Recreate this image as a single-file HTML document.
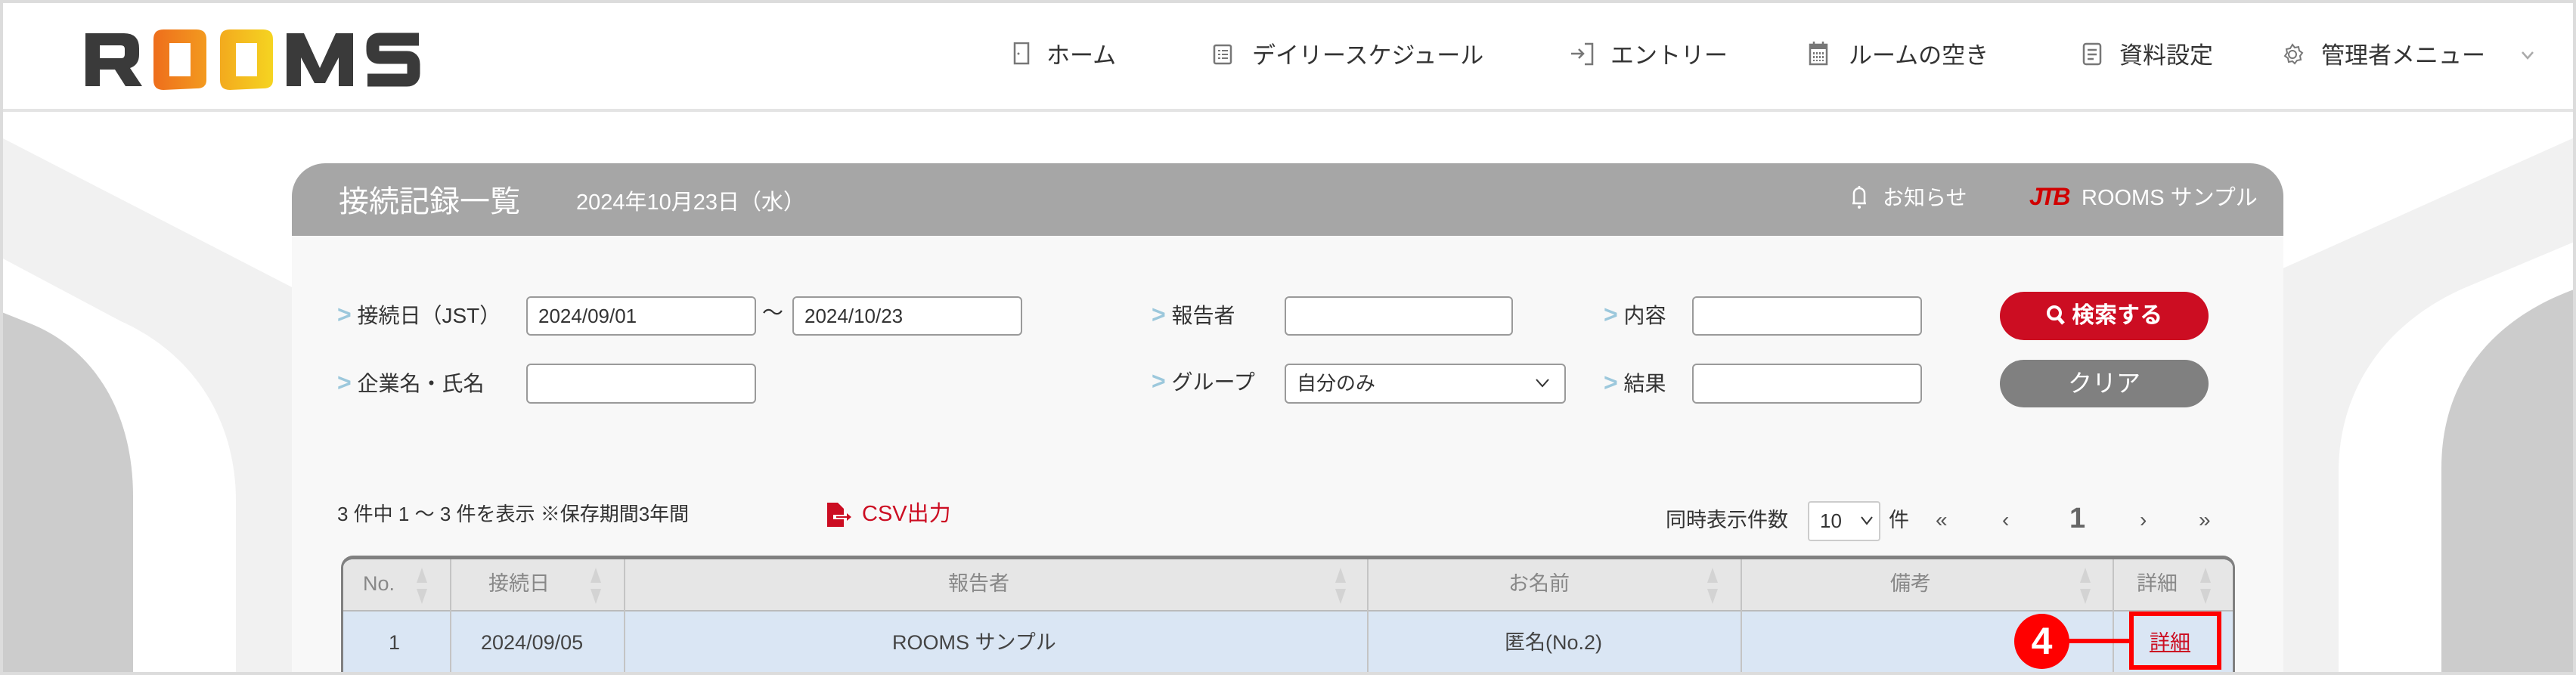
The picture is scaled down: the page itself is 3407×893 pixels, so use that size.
<!DOCTYPE html>
<html><head><meta charset="utf-8">
<style>
*{margin:0;padding:0;box-sizing:border-box}
html,body{width:3407px;height:893px;overflow:hidden}
body{background:#fff;font-family:"Liberation Sans","Noto Sans CJK JP",sans-serif;color:#333;position:relative}
.a{position:absolute;white-space:nowrap}
.nav{font-size:31px;color:#333;top:54px;line-height:40px}
.lbl{font-size:28px;color:#333;line-height:36px}
.chev{color:#9cc8dc;font-weight:bold;font-size:32px}
.inp{position:absolute;background:#fff;border:2px solid #9a9a9a;border-radius:6px;font-size:26px;padding-left:14px;line-height:48px;color:#333}
.th{font-size:27px;color:#888;line-height:40px}
.td{font-size:27px;color:#444;line-height:40px}
.sort{position:absolute;width:14px;height:48px}
.sort:before{content:"";position:absolute;left:0;top:0;border-left:7px solid transparent;border-right:7px solid transparent;border-bottom:20px solid #d3d3d3}
.sort:after{content:"";position:absolute;left:0;bottom:0;border-left:7px solid transparent;border-right:7px solid transparent;border-top:20px solid #d3d3d3}
.vl{position:absolute;width:2px;background:#c4c4c4}
</style></head><body>
<svg class="a" style="left:0;top:0" width="3407" height="893">
<path d="M0 181 L390 382 L390 893 L0 893Z" fill="#f1f1f1"/>
<path d="M0 340 L160 425 C260 470 312 560 312 662 L312 893 L0 893Z" fill="#fff"/>
<path d="M0 412 L40 428 C120 460 176 540 176 657 L176 893 L0 893Z" fill="#ccc"/>
<path d="M3407 181 L3015 357 L3015 893 L3407 893Z" fill="#f1f1f1"/>
<path d="M3407 319 L3257 382 C3150 430 3093 520 3093 624 L3093 893 L3407 893Z" fill="#fff"/>
<path d="M3407 382 C3300 420 3229 500 3229 619 L3229 893 L3407 893Z" fill="#ccc"/>
</svg>
<div class="a" style="left:0;top:0;width:3407px;height:148px;background:#fff;border-bottom:4px solid #e4e4e4"></div>
<div class="a" style="left:386px;top:216px;width:2634px;height:677px;background:#f8f8f8;border-radius:44px 44px 0 0;overflow:hidden">
<div style="height:96px;background:#a6a6a6"></div></div>
<svg class="a" style="left:110px;top:38px" width="450" height="84" viewBox="0 0 450 84">
<defs><linearGradient id="g1" x1="0" x2="1"><stop offset="0" stop-color="#ee6e1c"/><stop offset="1" stop-color="#f39a1f"/></linearGradient>
<linearGradient id="g2" x1="0" x2="1"><stop offset="0" stop-color="#f3aa1e"/><stop offset="1" stop-color="#f5d421"/></linearGradient></defs>
<path d="M3 6 H54 Q74 6 74 26 V34 Q74 48 62 52 L78 76 H56 L42 54 H22 V76 H3Z M22 22 V39 H50 Q55 39 55 34 V27 Q55 22 50 22Z" fill="#3a3a3a"/>
<path d="M106 1 H150 Q163 1 163 14 V68 Q163 79 150 79 L106 81 Q93 81 93 68 V14 Q93 1 106 1Z M114 19 V63 H142 V19Z" fill="url(#g1)"/>
<path d="M194 1 H238 Q251 1 251 14 V68 Q251 79 238 79 L194 81 Q181 81 181 68 V14 Q181 1 194 1Z M202 19 V63 H230 V19Z" fill="url(#g2)"/>
<path d="M269 6 H292 L313 52 L334 6 H357 V76 H338 V38 L320 72 H306 L288 38 V76 H269Z" fill="#3a3a3a"/>
<path d="M444 14 H392 Q383 14 383 23 V29 Q383 38 392 38 H428 Q437 38 437 47 V59 Q437 68 428 68 H376" fill="none" stroke="#3a3a3a" stroke-width="17"/>
</svg>
<svg class="a" style="left:1340px;top:56px" width="24" height="30"><rect x="2" y="1" width="18" height="27" fill="none" stroke="#777" stroke-width="2.5"/><circle cx="7" cy="15" r="1.5" fill="#777"/></svg>
<div class="a nav" style="left:1384px">ホーム</div>
<svg class="a" style="left:1604px;top:58px" width="28" height="28"><rect x="2" y="2" width="22" height="24" rx="2" fill="none" stroke="#777" stroke-width="2.5"/><path d="M7 9h3M12 9h8M7 14h3M12 14h8M7 19h3M12 19h8" stroke="#777" stroke-width="2"/></svg>
<div class="a nav" style="left:1656px">デイリースケジュール</div>
<svg class="a" style="left:2076px;top:56px" width="34" height="32"><path d="M2 15h16M12 9l6 6-6 6" stroke="#777" stroke-width="2.5" fill="none"/><path d="M20 2h10v27H20" stroke="#777" stroke-width="2.5" fill="none"/></svg>
<div class="a nav" style="left:2130px">エントリー</div>
<svg class="a" style="left:2392px;top:54px" width="28" height="34"><rect x="2" y="5" width="22" height="26" fill="none" stroke="#777" stroke-width="2.5"/><rect x="2" y="5" width="22" height="6" fill="#777"/><path d="M7 1v6M19 1v6" stroke="#777" stroke-width="2.5"/><path d="M7 15v12M11 15v12M15 15v12M19 15v12" stroke="#777" stroke-width="2" stroke-dasharray="3 2"/></svg>
<div class="a nav" style="left:2445px">ルームの空き</div>
<svg class="a" style="left:2754px;top:56px" width="28" height="32"><rect x="2" y="2" width="22" height="27" rx="3" fill="none" stroke="#777" stroke-width="2.5"/><path d="M7 10h12M7 16h12M7 22h8" stroke="#777" stroke-width="2.5"/></svg>
<div class="a nav" style="left:2803px">資料設定</div>
<svg class="a" style="left:3016px;top:56px" width="32" height="32" viewBox="0 0 32 32"><path d="M16 3l3 4 5-1 1 5 4 3-3 4 1 5-5 1-3 4-3-3-5 1-1-5-4-3 3-4-1-5 5-1z" fill="none" stroke="#777" stroke-width="2"/><circle cx="16" cy="16" r="5" fill="none" stroke="#777" stroke-width="2"/></svg>
<div class="a nav" style="left:3070px">管理者メニュー</div>
<svg class="a" style="left:3334px;top:66px" width="18" height="14"><path d="M2 3l7 8 7-8" stroke="#aaa" stroke-width="2.5" fill="none"/></svg>
<div class="a" style="left:448px;top:242px;font-size:40px;color:#fff;line-height:50px">接続記録一覧</div>
<div class="a" style="left:762px;top:250px;font-size:29px;color:#fff;line-height:36px">2024年10月23日（水）</div>
<svg class="a" style="left:2448px;top:244px" width="22" height="34"><path d="M4 24V12a7 7 0 0 1 14 0v12M2 25h18M11 2v3" stroke="#fff" stroke-width="2.5" fill="none"/><circle cx="11" cy="30" r="2" fill="#fff"/></svg>
<div class="a" style="left:2490px;top:244px;font-size:28px;color:#fff;line-height:36px">お知らせ</div>
<div class="a" style="left:2684px;top:240px;font-size:32px;color:#d10000;font-weight:bold;font-style:italic;line-height:40px;letter-spacing:-3px">JTB</div>
<div class="a" style="left:2753px;top:243px;font-size:29px;color:#fff;line-height:38px">ROOMS サンプル</div>
<div class="a lbl" style="left:446px;top:398px"><span class="chev">&gt;</span> 接続日（JST）</div>
<div class="inp" style="left:696px;top:392px;width:304px;height:52px">2024/09/01</div>
<div class="a lbl" style="left:1008px;top:396px">〜</div>
<div class="inp" style="left:1048px;top:392px;width:304px;height:52px">2024/10/23</div>
<div class="a lbl" style="left:1523px;top:398px"><span class="chev">&gt;</span> 報告者</div>
<div class="inp" style="left:1699px;top:392px;width:302px;height:52px"></div>
<div class="a lbl" style="left:2121px;top:398px"><span class="chev">&gt;</span> 内容</div>
<div class="inp" style="left:2238px;top:392px;width:304px;height:52px"></div>
<div class="a" style="left:2645px;top:386px;width:276px;height:64px;border-radius:32px;background:#cc0d22;color:#fff;font-size:30px;line-height:64px;text-align:center;font-weight:bold"><svg width="26" height="28" style="vertical-align:-4px"><circle cx="11" cy="11" r="8" fill="none" stroke="#fff" stroke-width="4"/><path d="M16 17l7 8" stroke="#fff" stroke-width="5"/></svg> 検索する</div>
<div class="a lbl" style="left:446px;top:488px"><span class="chev">&gt;</span> 企業名・氏名</div>
<div class="inp" style="left:696px;top:481px;width:304px;height:53px"></div>
<div class="a lbl" style="left:1523px;top:486px"><span class="chev">&gt;</span> グループ</div>
<div class="inp" style="left:1699px;top:481px;width:372px;height:53px">自分のみ</div>
<svg class="a" style="left:2030px;top:500px" width="20" height="14"><path d="M2 2l8 9 8-9" stroke="#333" stroke-width="2" fill="none"/></svg>
<div class="a lbl" style="left:2121px;top:488px"><span class="chev">&gt;</span> 結果</div>
<div class="inp" style="left:2238px;top:481px;width:304px;height:53px"></div>
<div class="a" style="left:2645px;top:476px;width:276px;height:63px;border-radius:32px;background:#808080;color:#fff;font-size:32px;line-height:63px;text-align:center">クリア</div>
<div class="a" style="left:446px;top:662px;font-size:26px;line-height:36px;color:#333">3 件中 1 〜 3 件を表示 ※保存期間3年間</div>
<svg class="a" style="left:1094px;top:665px" width="38" height="32"><path d="M0 0h14l8 8v24H0z" fill="#cc0d22"/><path d="M8 16h14v-5l8 8-8 8v-5H8z" fill="#fff"/><path d="M12 18h14v-4l6 5-6 5v-4H12z" fill="#cc0d22"/></svg>
<div class="a" style="left:1140px;top:662px;font-size:29px;line-height:36px;color:#cc0d22">CSV出力</div>
<div class="a" style="left:2203px;top:670px;font-size:27px;line-height:36px">同時表示件数</div>
<div class="a" style="left:2391px;top:663px;width:96px;height:53px;border:2px solid #ccc;border-radius:4px;background:#fff;font-size:26px;line-height:49px;padding-left:14px">10</div>
<svg class="a" style="left:2460px;top:682px" width="18" height="14"><path d="M2 2l7 9 7-9" stroke="#333" stroke-width="2" fill="none"/></svg>
<div class="a" style="left:2498px;top:670px;font-size:27px;line-height:36px">件</div>
<div class="a" style="left:2560px;top:670px;font-size:28px;line-height:36px;color:#555">«</div>
<div class="a" style="left:2648px;top:670px;font-size:28px;line-height:36px;color:#555">‹</div>
<div class="a" style="left:2737px;top:664px;font-size:38px;line-height:44px;color:#666;font-weight:bold">1</div>
<div class="a" style="left:2830px;top:670px;font-size:28px;line-height:36px;color:#555">›</div>
<div class="a" style="left:2908px;top:670px;font-size:28px;line-height:36px;color:#555">»</div>
<div class="a" style="left:451px;top:735px;width:2505px;height:158px;border:3px solid #808080;border-top-width:5px;border-bottom:0;border-radius:16px 16px 0 0;overflow:hidden;background:#dae6f4">
<div style="height:69px;background:#e6e6e6;border-bottom:2px solid #bbb"></div></div>
<div class="vl" style="left:595px;top:740px;height:153px"></div>
<div class="vl" style="left:825px;top:740px;height:153px"></div>
<div class="vl" style="left:1808px;top:740px;height:153px"></div>
<div class="vl" style="left:2302px;top:740px;height:153px"></div>
<div class="vl" style="left:2794px;top:740px;height:153px"></div>
<div class="a th" style="left:480px;top:752px">No.</div><div class="sort" style="left:551px;top:751px"></div>
<div class="a th" style="left:646px;top:752px">接続日</div><div class="sort" style="left:781px;top:751px"></div>
<div class="a th" style="left:1254px;top:752px">報告者</div><div class="sort" style="left:1766px;top:751px"></div>
<div class="a th" style="left:1995px;top:752px">お名前</div><div class="sort" style="left:2258px;top:751px"></div>
<div class="a th" style="left:2500px;top:752px">備考</div><div class="sort" style="left:2751px;top:751px"></div>
<div class="a th" style="left:2826px;top:752px">詳細</div><div class="sort" style="left:2910px;top:751px"></div>
<div class="a td" style="left:514px;top:830px">1</div>
<div class="a td" style="left:636px;top:830px">2024/09/05</div>
<div class="a td" style="left:1180px;top:830px">ROOMS サンプル</div>
<div class="a td" style="left:1990px;top:830px">匿名(No.2)</div>
<div class="a" style="left:2816px;top:809px;width:122px;height:77px;border:6px solid #f00"></div>
<div class="a td" style="left:2843px;top:830px;color:#cc0d22;text-decoration:underline">詳細</div>
<div class="a" style="left:2734px;top:845px;width:84px;height:6px;background:#f00"></div>
<div class="a" style="left:2664px;top:812px;width:73px;height:73px;border-radius:50%;background:#f00;color:#fff;font-weight:bold;font-size:50px;line-height:73px;text-align:center">4</div>
<div class="a" style="left:0;top:0;width:3407px;height:893px;border:4px solid #dcdcdc;z-index:20;pointer-events:none"></div>
</body></html>
